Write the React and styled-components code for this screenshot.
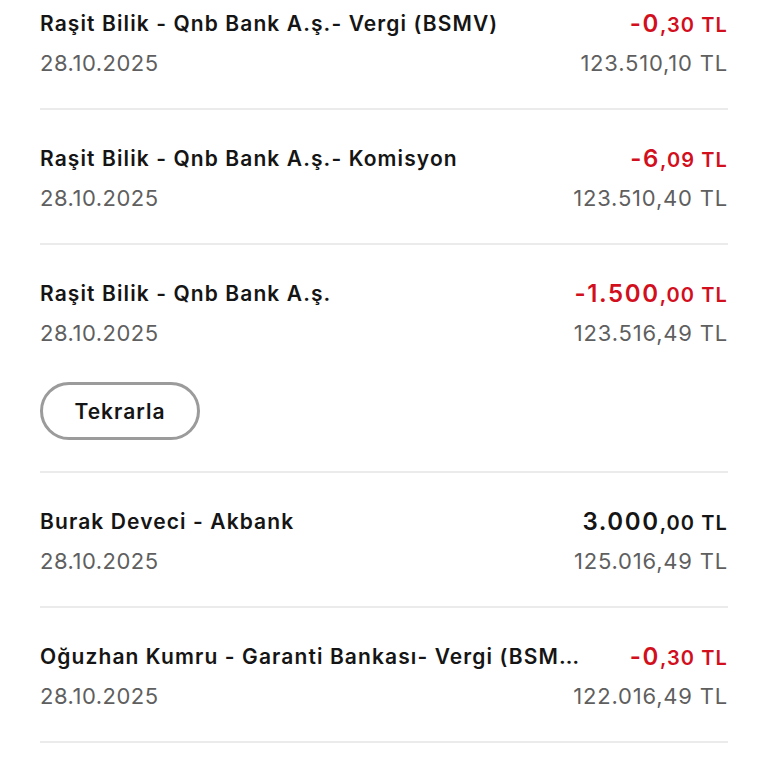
import React from "react";
import styled, { createGlobalStyle } from "styled-components";

const GlobalStyle = createGlobalStyle`
  html, body {
    margin: 0;
    padding: 0;
    background: #ffffff;
    overflow: hidden;
  }
  body {
    font-family: "Inter", "Liberation Sans", sans-serif;
  }
`;

const List = styled.div`
  display: flex;
  flex-direction: column;
  width: 768px;
  margin-top: -25px;
  padding: 0 40px;
  box-sizing: border-box;
`;

const Row = styled.div`
  display: flex;
  flex-direction: column;
  padding: 36px 0 ${(p) => (p.$withAction ? "31px" : "33px")};
  border-bottom: 2px solid #ebebeb;
`;

const Line = styled.div`
  display: flex;
  flex-direction: row;
  align-items: center;
  justify-content: space-between;
  gap: 40px;
  height: 24px;
  & + & {
    margin-top: 16px;
  }
`;

const Title = styled.div`
  flex: 1;
  min-width: 0;
  max-width: 541px;
  font-size: 21px;
  font-weight: 600;
  letter-spacing: 1.1px;
  color: #151515;
  white-space: nowrap;
  overflow: hidden;
  text-overflow: ellipsis;
`;

const DateText = styled.div`
  font-size: 22px;
  letter-spacing: 0.5px;
  color: #5f5f5f;
`;

const Amount = styled.div`
  flex-shrink: 0;
  font-weight: 600;
  color: ${(p) => (p.$negative ? "#d20f1d" : "#151515")};
  white-space: nowrap;
  & b {
    font-size: 24px;
    font-weight: 600;
    letter-spacing: 1.6px;
  }
  & span {
    font-size: 20px;
    letter-spacing: 1.1px;
  }
`;

const Balance = styled.div`
  font-size: 22px;
  letter-spacing: 0.8px;
  color: #5f5f5f;
  white-space: nowrap;
`;

const RepeatButton = styled.button`
  display: flex;
  align-items: center;
  justify-content: center;
  width: 160px;
  height: 58px;
  margin-top: 37px;
  border: 3px solid #9b9b9b;
  border-radius: 29px;
  background: #ffffff;
  font-family: inherit;
  font-size: 21px;
  font-weight: 600;
  letter-spacing: 1px;
  color: #151515;
  cursor: pointer;
`;

const transactions = [
  {
    title: "Raşit Bilik - Qnb Bank A.ş.- Vergi (BSMV)",
    main: "-0",
    decimals: ",30 TL",
    negative: true,
    balance: "123.510,10 TL",
  },
  {
    title: "Raşit Bilik - Qnb Bank A.ş.- Komisyon",
    main: "-6",
    decimals: ",09 TL",
    negative: true,
    balance: "123.510,40 TL",
  },
  {
    title: "Raşit Bilik - Qnb Bank A.ş.",
    main: "-1.500",
    decimals: ",00 TL",
    negative: true,
    balance: "123.516,49 TL",
    repeat: true,
  },
  {
    title: "Burak Deveci - Akbank",
    main: "3.000",
    decimals: ",00 TL",
    negative: false,
    balance: "125.016,49 TL",
  },
  {
    title: "Oğuzhan Kumru - Garanti Bankası- Vergi (BSMV)",
    main: "-0",
    decimals: ",30 TL",
    negative: true,
    balance: "122.016,49 TL",
  },
];

const App = () => {
  return (
    <>
      <GlobalStyle />
      <List>
        {transactions.map((t, i) => (
          <Row key={i} $withAction={t.repeat}>
            <Line>
              <Title>{t.title}</Title>
              <Amount $negative={t.negative}>
                <b>{t.main}</b>
                <span>{t.decimals}</span>
              </Amount>
            </Line>
            <Line>
              <DateText>28.10.2025</DateText>
              <Balance>{t.balance}</Balance>
            </Line>
            {t.repeat && <RepeatButton>Tekrarla</RepeatButton>}
          </Row>
        ))}
      </List>
    </>
  );
};

export default App;
